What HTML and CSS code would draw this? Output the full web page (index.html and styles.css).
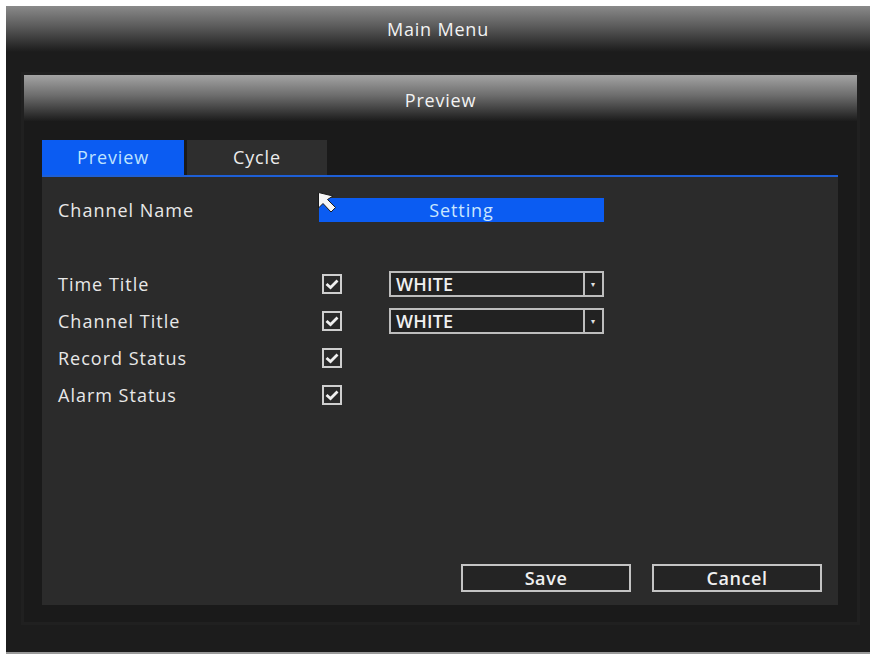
FILE: index.html
```html
<!DOCTYPE html>
<html lang="en">
<head>
    <meta charset="UTF-8">
    <meta name="viewport" content="width=device-width, initial-scale=1.0">
    <title>Main Menu - Preview</title>
    <link rel="stylesheet" href="styles.css">
</head>
<body>
    <div class="screen">
        <div class="main-title">Main Menu</div>

        <div class="dialog">
            <div class="dialog-title">Preview</div>

            <div class="dialog-body">
                <div class="tabs">
                    <div class="tab active">Preview</div>
                    <div class="tab">Cycle</div>
                </div>

                <div class="panel">
                    <div class="row first">
                        <span class="label">Channel Name</span>
                        <div class="setting-wrap">
                            <button class="setting">Setting</button>
                            <svg class="cursor" width="26" height="26" viewBox="0 0 26 26">
                                <path d="M1.5 1.5 L1.5 17 L6 12.5 L14 21 L18.5 16.5 L10.5 8.5 L16 5 Z" fill="#f6f6f6" stroke="#1a1a1a" stroke-width="1"/>
                            </svg>
                        </div>
                    </div>

                    <div class="options">
                        <div class="row">
                            <span class="label">Time Title</span>
                            <span class="check"><svg width="14" height="12" viewBox="0 0 14 12"><polyline points="1.5,6 5.5,9.5 12.5,2.5" fill="none" stroke="#f0f0f0" stroke-width="2.8"/></svg></span>
                            <div class="select"><span class="select-text">WHITE</span><span class="select-arrow">&#9662;</span></div>
                        </div>
                        <div class="row">
                            <span class="label">Channel Title</span>
                            <span class="check"><svg width="14" height="12" viewBox="0 0 14 12"><polyline points="1.5,6 5.5,9.5 12.5,2.5" fill="none" stroke="#f0f0f0" stroke-width="2.8"/></svg></span>
                            <div class="select"><span class="select-text">WHITE</span><span class="select-arrow">&#9662;</span></div>
                        </div>
                        <div class="row">
                            <span class="label">Record Status</span>
                            <span class="check"><svg width="14" height="12" viewBox="0 0 14 12"><polyline points="1.5,6 5.5,9.5 12.5,2.5" fill="none" stroke="#f0f0f0" stroke-width="2.8"/></svg></span>
                        </div>
                        <div class="row">
                            <span class="label">Alarm Status</span>
                            <span class="check"><svg width="14" height="12" viewBox="0 0 14 12"><polyline points="1.5,6 5.5,9.5 12.5,2.5" fill="none" stroke="#f0f0f0" stroke-width="2.8"/></svg></span>
                        </div>
                    </div>

                    <div class="actions">
                        <button class="btn">Save</button>
                        <button class="btn">Cancel</button>
                    </div>
                </div>
            </div>
        </div>
    </div>
</body>
</html>
```

FILE: styles.css
```css
* {
    box-sizing: border-box;
}
body {
    margin: 0;
    background-color: #ffffff;
    font-family: "Open Sans", "Noto Sans", sans-serif;
    letter-spacing: 0.6px;
    color: #e6e6e6;
}
.screen {
    margin: 6px 0 0 6px;
    width: 864px;
    height: 648px;
    background-color: #1c1c1c;
    border-bottom: 2px solid #9a9a9a;
    padding-bottom: 30px;
    display: flex;
    flex-direction: column;
}
.main-title {
    height: 46px;
    background: linear-gradient(to bottom, #8a8a8a 0%, #5a5a5a 45%, #262626 90%, #1c1c1c 100%);
    text-align: center;
    font-size: 18px;
    line-height: 46px;
    letter-spacing: 0.8px;
    color: #f2f2f2;
}
.dialog {
    margin: 23px 13px 0 18px;
    flex: 1;
    background-color: #1a1a1a;
    box-shadow: 0 0 0 3px #202020;
    display: flex;
    flex-direction: column;
}
.dialog-title {
    height: 46px;
    background: linear-gradient(to bottom, #a4a4a4 0%, #6c6c6c 45%, #2a2a2a 90%, #1c1c1c 100%);
    text-align: center;
    font-size: 18px;
    line-height: 50px;
    letter-spacing: 0.8px;
    color: #f2f2f2;
}
.dialog-body {
    flex: 1;
    padding: 19px 19px 17px 18px;
    display: flex;
    flex-direction: column;
}
.tabs {
    display: flex;
    gap: 3px;
    border-bottom: 2px solid #1e5fd6;
}
.tab {
    width: 142px;
    height: 35px;
    line-height: 34px;
    text-align: center;
    font-size: 18px;
    letter-spacing: 0.9px;
    background-color: #2e2e2e;
    color: #ececec;
}
.tab.active {
    background-color: #0b5cf2;
    color: #bfe3ff;
}
.tab + .tab {
    width: 140px;
}
.panel {
    flex: 1;
    background-color: #2b2b2b;
    padding: 21px 16px 13px 16px;
    display: flex;
    flex-direction: column;
}
.row {
    display: flex;
    align-items: center;
    height: 26px;
}
.row.first {
    height: 24px;
}
.label {
    width: 261px;
    font-size: 18px;
    letter-spacing: 1px;
    color: #e8e8e8;
}
.setting-wrap {
    position: relative;
}
.setting {
    width: 285px;
    height: 24px;
    border: none;
    background-color: #0b5cf2;
    color: #c9e6ff;
    font-family: inherit;
    letter-spacing: 0.9px;
    font-size: 18px;
    line-height: 24px;
    padding: 0;
    display: block;
}
.cursor {
    position: absolute;
    left: -2px;
    top: -7px;
}
.options {
    margin-top: 49px;
    display: flex;
    flex-direction: column;
    gap: 11px;
}
.check {
    width: 20px;
    height: 20px;
    margin-left: 3px;
    border: 2px solid #cfcfcf;
    background-color: #2a2a2a;
    display: flex;
    align-items: center;
    justify-content: center;
}
.select {
    margin-left: 47px;
    width: 215px;
    height: 26px;
    border: 2px solid #bdbdbd;
    background-color: #222222;
    display: flex;
}
.select-text {
    flex: 1;
    padding-left: 5px;
    font-size: 18px;
    font-weight: 600;
    letter-spacing: 0.2px;
    line-height: 22px;
    color: #f0f0f0;
}
.select-arrow {
    width: 19px;
    border-left: 2px solid #bdbdbd;
    font-size: 8px;
    line-height: 22px;
    text-align: center;
    color: #e0e0e0;
}
.actions {
    margin-top: auto;
    display: flex;
    justify-content: flex-end;
    gap: 21px;
}
.btn {
    width: 170px;
    height: 28px;
    background-color: #242424;
    border: 2px solid #c4c4c4;
    color: #f0f0f0;
    font-family: inherit;
    font-weight: 600;
    letter-spacing: 0.6px;
    font-size: 18px;
    padding: 0;
    line-height: 22px;
}
```
